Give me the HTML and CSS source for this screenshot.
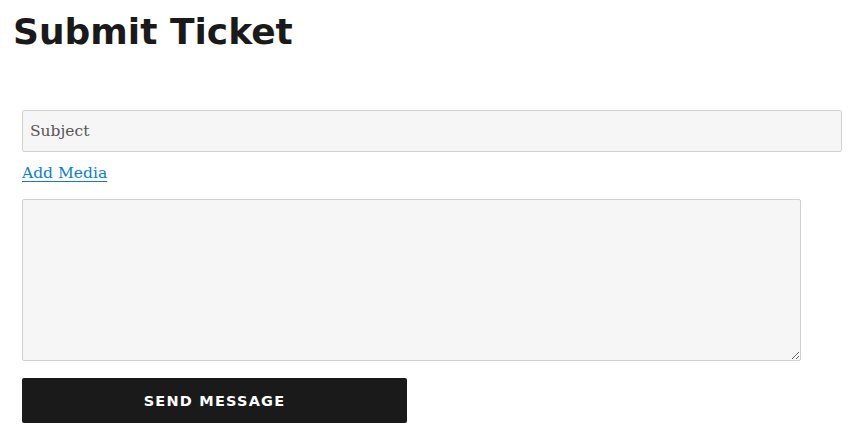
FILE: index.html
```html
<!DOCTYPE html>
<html>
<head>
<meta charset="utf-8">
<link rel="stylesheet" href="styles.css">
</head>
<body>
<div class="page">
  <h1 class="title">Submit Ticket</h1>
  <form class="ticket-form">
    <input class="subject" type="text" placeholder="Subject">
    <a class="add-media" href="#">Add Media</a>
    <textarea class="message"></textarea>
    <button class="send" type="button">Send Message</button>
  </form>
</div>
</body>
</html>
```
FILE: styles.css
```css
html, body { margin: 0; padding: 0; background: #fff; }
.page { padding: 8px 0 0 13px; }
.title {
  margin: 0;
  font-family: "DejaVu Sans", sans-serif;
  font-weight: 700;
  font-size: 36px;
  line-height: 48px;
  color: #1a1a1a;
}
.ticket-form {
  display: flex;
  flex-direction: column;
  align-items: flex-start;
  margin: 54px 0 0 9px;
}
.subject {
  box-sizing: border-box;
  width: 820px;
  height: 42px;
  margin: 0;
  padding: 0 7px;
  background: #f6f6f6;
  border: 1px solid #d1d1d1;
  border-radius: 2px;
  font-family: "DejaVu Serif", serif;
  font-size: 15.5px;
  color: #555;
  outline: none;
}
.subject::placeholder { color: #555; opacity: 1; }
.add-media {
  margin-top: 10px;
  font-family: "DejaVu Serif", serif;
  font-size: 15.5px;
  line-height: 22px;
  color: #0a7ed4;
  text-decoration: underline;
  text-underline-offset: 3px;
}
.message {
  box-sizing: border-box;
  width: 779px;
  height: 162px;
  margin: 15px 0 0 0;
  background: #f6f6f6;
  border: 1px solid #d1d1d1;
  border-radius: 2px;
  display: block;
}
.send {
  width: 385px;
  height: 45px;
  margin-top: 17px;
  background: #1a1a1a;
  color: #fff;
  border: 0;
  border-radius: 2px;
  font-family: "DejaVu Sans", sans-serif;
  font-weight: 700;
  font-size: 14.5px;
  letter-spacing: 1.2px;
  text-transform: uppercase;
}
```
